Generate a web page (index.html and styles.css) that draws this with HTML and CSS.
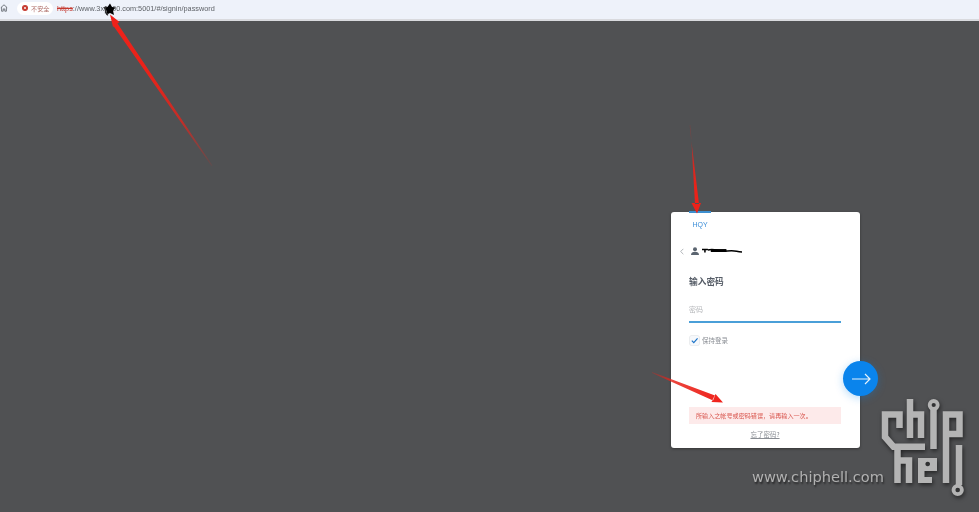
FILE: index.html
```html
<!DOCTYPE html>
<html lang="zh">
<head>
<meta charset="utf-8">
<title>登录</title>
<link rel="stylesheet" href="styles.css">
</head>
<body>
<header class="topbar">
  <svg class="home" viewBox="0 0 10 10" width="8" height="8"><path d="M1 4.600 5 1l4 3.600M2 4v5h2V6.200h2V9h2V4" fill="none" stroke="#5a5f66" stroke-width="1"/></svg>
  <div class="security">
    <svg viewBox="0 0 10 10" width="6" height="6"><circle cx="5" cy="5" r="5" fill="#c5392f"/><path d="M3.200 3.200l3.600 3.600M6.800 3.200 3.200 6.800" stroke="#fff" stroke-width="1.200"/></svg>
    <span>不安全</span>
  </div>
  <div class="url"><span class="scheme">https</span>://www.3x0000.com:5001/#/signin/password</div>
</header>
<main class="stage">
  <section class="card">
    <nav class="tabs"><span class="tab">HQY</span></nav>
    <div class="account">
      <svg class="back" viewBox="0 0 6 10" width="4" height="7"><path d="M5 1 1 5l4 4" fill="none" stroke="#8a8f96" stroke-width="1"/></svg>
      <svg class="user" viewBox="0 0 10 10" width="8" height="8"><circle cx="5" cy="2.800" r="2.500" fill="#5b6470"/><path d="M0 10c0-3 2-4 5-4s5 1 5 4z" fill="#5b6470"/></svg>
      <svg class="redact" viewBox="0 0 42 6" width="41" height="6"><path d="M0 1.500h6M3 1.500v3M6 2c8-2 10 2 20 1s8 1 15 1" fill="none" stroke="#000" stroke-width="1.600"/><path d="M9 2.500h16" stroke="#000" stroke-width="3"/></svg>
    </div>
    <div class="form">
      <h1 class="title">输入密码</h1>
      <div class="field">密码</div>
      <label class="keep">
        <span class="check"><svg viewBox="0 0 10 10" width="9" height="9"><path d="M2 5.200 4.200 7.400 8.400 2.600" fill="none" stroke="#1a73c8" stroke-width="1.300"/></svg></span>
        <span>保持登录</span>
      </label>
      <div class="error">所输入之帐号或密码错误，请再输入一次。</div>
      <a class="forgot">忘了密码?</a>
    </div>
    <button class="go" aria-label="下一步"><svg viewBox="0 0 20 12" width="20" height="12"><path d="M1 6h18M14 1l5 5-5 5" fill="none" stroke="#e6f2fb" stroke-width="1.200"/></svg></button>
  </section>
</main>

<svg class="marks" viewBox="0 0 979 512" width="979" height="512">
  <defs>
    <linearGradient id="a1" gradientUnits="userSpaceOnUse" x1="212" y1="166" x2="112" y2="18"><stop offset="0" stop-color="#e8231a" stop-opacity=".1"/><stop offset=".3" stop-color="#e8231a" stop-opacity=".75"/><stop offset=".6" stop-color="#e8231a"/><stop offset="1" stop-color="#f0211a"/></linearGradient>
    <linearGradient id="a2" gradientUnits="userSpaceOnUse" x1="690" y1="125" x2="697" y2="212"><stop offset="0" stop-color="#e8231a" stop-opacity=".1"/><stop offset=".35" stop-color="#e8231a" stop-opacity=".8"/><stop offset=".7" stop-color="#e8231a"/><stop offset="1" stop-color="#f0211a"/></linearGradient>
    <linearGradient id="a3" gradientUnits="userSpaceOnUse" x1="652" y1="372" x2="723" y2="402"><stop offset="0" stop-color="#e8231a" stop-opacity=".25"/><stop offset=".3" stop-color="#e8231a" stop-opacity=".85"/><stop offset="1" stop-color="#f0211a"/></linearGradient>
  </defs>
  <path d="M212.500 165.500 211.500 166 113.500 26 117.500 23.500z M110 14.500l9.500 7.500-6.500 5z" fill="url(#a1)"/>
  <path d="M689.500 125 690.500 125 695 204 699 204z M691.500 203h9.500L697 213.500z" fill="url(#a2)"/>
  <path d="M652 372 652 373 713 400.500 715 395.500z M723 402.500l-11.500-.5 4-8z" fill="url(#a3)"/>
  <path d="M110 3.500l2 3.500 3.500.5-2.500 3 1 4.500-4-2-4 2 .5-4.500-3-3 4-.5z" fill="#000"/>
  <path d="M105.500 6.500v7M107.500 13v2.500" fill="none" stroke="#333" stroke-width="1.200"/>
</svg>

<svg class="logo" viewBox="0 0 979 512" width="979" height="512">
  <g fill="none" stroke="#b4b4b4" stroke-width="6.500">
    <path d="M899.500 428V414.500H885V437L893.500 446.700H925"/>
    <path d="M897.500 446V483M897.500 460.500H909V483"/>
    <path d="M910 399V438"/>
    <path d="M910 414.500H921V438"/>
    <path d="M933.500 409V449"/>
    <path d="M946 483V414.500H959.500V434H946"/>
    <path d="M959 445V485"/>
  </g>
  <path fill-rule="evenodd" d="M918 458H937V471H924.500V477H932V483H918ZM927.700 461.700a2.300 2.300 0 1 0 .01 0Z" fill="#b4b4b4"/>
  <circle cx="933.700" cy="405" r="4" fill="none" stroke="#b4b4b4" stroke-width="3.800"/>
  <circle cx="957.700" cy="490" r="4.200" fill="none" stroke="#b4b4b4" stroke-width="3.800"/>
</svg>
<div class="site">www.chiphell.com</div>
</body>
</html>
```
FILE: styles.css
```css
* { box-sizing: border-box; }
html, body { margin: 0; height: 100%; }
body {
  width: 979px;
  height: 512px;
  overflow: hidden;
  position: relative;
  display: flex;
  flex-direction: column;
  background: #505153;
  font-family: "Noto Sans CJK SC", "Liberation Sans", sans-serif;
  color: #4a5058;
}
.topbar, .stage, .marks, .site { filter: blur(.35px); }
.topbar {
  flex: none;
  height: 21px;
  padding: 1px 0 4px;
  display: flex;
  align-items: center;
  background: #eef2fa;
  border-bottom: 2px solid #d9dade;
  background-clip: padding-box;
}
.security {
  margin-left: 9px;
  width: 36px;
  height: 13px;
  border-radius: 7px;
  background: #fff;
  display: flex;
  align-items: center;
  gap: 3px;
  padding-left: 5px;
  font-size: 6.200px;
  color: #ad6a64;
}
.url {
  margin-left: 4px;
  font: 7.300px "Liberation Sans", sans-serif;
  color: #5f6368;
  white-space: nowrap;
}
.scheme { color: #c5392f; text-decoration: line-through; }
.stage {
  flex: 1;
  display: flex;
  justify-content: flex-end;
  align-items: flex-start;
  padding: 191px 119px 0 0;
}
.card {
  position: relative;
  width: 189px;
  height: 236px;
  background: #fff;
  border-radius: 3px;
  box-shadow: 0 1px 3px rgba(0, 0, 0, .35);
}
.tabs { padding-left: 18px; height: 27px; }
.tab {
  display: block;
  width: 22px;
  height: 21px;
  border-top: 2px solid #3d8fd0;
  text-align: center;
  font: 7px/24px "Liberation Sans", sans-serif;
  color: #3d8ed8;
  position: relative;
  top: -1px;
}
.account {
  height: 8px;
  margin-top: 8px;
  display: flex;
  align-items: center;
  padding-left: 9px;
}
.user { margin-left: 7px; }
.redact { margin-left: 3px; }
.form { padding: 0 19px 0 18px; }
.title {
  margin: 21px 0 0;
  font-size: 8.700px;
  line-height: 12px;
  font-weight: 700;
  color: #555c66;
}
.field {
  margin-top: 15px;
  height: 20px;
  font-size: 7px;
  line-height: 12px;
  color: #b4b6b9;
  border-bottom: 2px solid #4a9fd8;
}
.keep {
  margin-top: 12px;
  padding-left: 1px;
  display: flex;
  align-items: center;
  gap: 3px;
  font-size: 6.500px;
  line-height: 10px;
  color: #8a8e94;
}
.check {
  width: 9px;
  height: 9px;
  display: block;
  border-radius: 1px;
  box-shadow: 0 0 0 .5px #d8dbe0;
  background: #f6f8fb;
}
.check svg { display: block; }
.error {
  margin-top: 62px;
  height: 17px;
  padding-left: 7px;
  background: #fdeaea;
  font-size: 6.100px;
  line-height: 17px;
  color: #d9574f;
}
.forgot {
  display: block;
  margin-top: 6px;
  text-align: center;
  font-size: 6.500px;
  line-height: 9px;
  color: #8a8e94;
  text-decoration: underline;
}
.go {
  position: absolute;
  left: 172px;
  top: 149px;
  width: 35px;
  height: 35px;
  padding: 0;
  border: 0;
  border-radius: 50%;
  background: #0a84ec;
  box-shadow: 0 2px 8px rgba(10, 132, 236, .3);
  display: flex;
  align-items: center;
  justify-content: center;
}
.marks, .logo { position: absolute; left: 0; top: 0; pointer-events: none; }
.logo { filter: drop-shadow(1px 2px 2px rgba(0, 0, 0, .55)) blur(.3px); }
.site {
  position: absolute;
  left: 752px;
  top: 467px;
  font: 14.600px/20px "DejaVu Sans", sans-serif;
  color: #b1b1b1;
  text-shadow: 1px 2px 2px rgba(0, 0, 0, .55);
  white-space: nowrap;
}
```
